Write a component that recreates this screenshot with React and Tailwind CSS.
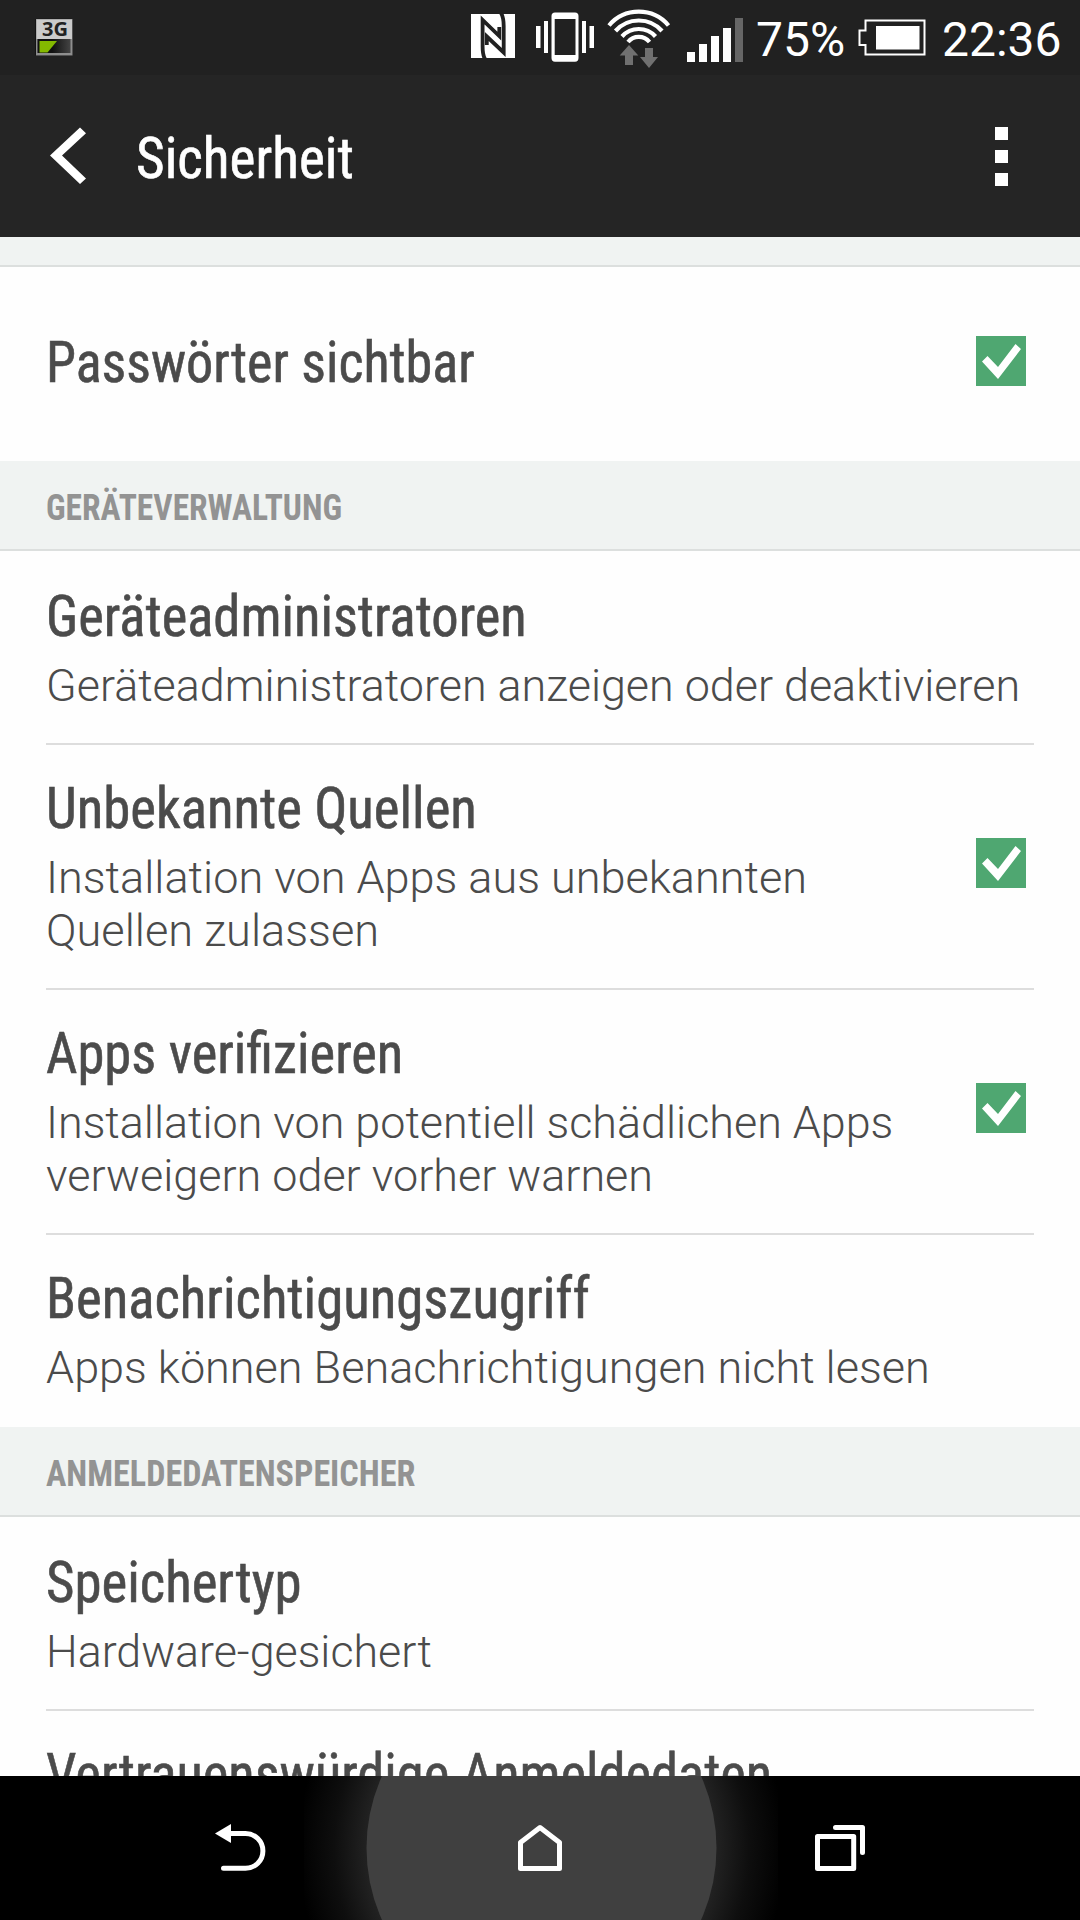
import { useLayoutEffect, useRef, useState } from 'react';

// Single line of text, squeezed horizontally to a given width.
function FitText({ width, className, children }) {
  const ref = useRef(null);
  const [scale, setScale] = useState(1);
  useLayoutEffect(() => {
    setScale(width / ref.current.offsetWidth);
  }, [width]);
  return (
    <div className="flex">
      <span
        ref={ref}
        className={`block origin-left whitespace-nowrap ${className}`}
        style={{ transform: `scaleX(${scale})` }}
      >
        {children}
      </span>
    </div>
  );
}

function NetworkIcon() {
  return (
    <svg className="h-[38px] w-[38px] overflow-visible" viewBox="0 0 38 38">
      <defs>
        <linearGradient id="net" x1="0" y1="0" x2="1" y2="0">
          <stop offset="0.45" stopColor="#111" />
          <stop offset="1" stopColor="#444" />
        </linearGradient>
      </defs>
      <rect x="0.3" y="0.8" width="37.2" height="37" rx="1" fill="#111" />
      <rect x="1" y="1" width="36.5" height="36.5" fill="#8e8e8e" />
      <rect x="1.5" y="1.5" width="35.5" height="19.5" fill="#cbcbcb" />
      <rect x="2.5" y="21" width="33" height="14" fill="url(#net)" />
      <path d="M4.500 23H22L12.500 34.500H4.500Z" fill="#84b900" />
      <text x="7" y="18" fontSize="19" fontWeight="700" fontFamily="Noto Sans, sans-serif" textLength="26" lengthAdjust="spacingAndGlyphs" fill="#222">3G</text>
    </svg>
  );
}

function NfcIcon() {
  return (
    <svg className="h-11 w-11" viewBox="0 0 44 44">
      <rect width="44" height="44" fill="#fff" />
      <g fill="none" stroke="#212121" strokeWidth="3.800">
        <path d="M14 45C11.500 41 11.600 37 11.600 32V6L28.300 22V13" />
        <path d="M30 -1C32.500 3 32.700 7 32.700 12V38.500L15.800 22.500V31" />
      </g>
    </svg>
  );
}

function VibrateIcon() {
  return (
    <svg className="h-[50px] w-[58px]" viewBox="0 0 58 50">
      <g fill="#fff">
        <rect x="0" y="14" width="4.500" height="22" />
        <rect x="8" y="9" width="4" height="32" />
        <rect x="46" y="9" width="4" height="32" />
        <rect x="53.500" y="14" width="4.500" height="22" />
        <path fillRule="evenodd" d="M19 0.500H39Q42.500 0.500 42.500 4V46Q42.500 49.700 39 49.700H19Q15.500 49.700 15.500 46V4Q15.500 0.500 19 0.500ZM18.700 7V43H39.500V7Z" />
      </g>
    </svg>
  );
}

function WifiIcon() {
  return (
    <svg className="h-[61px] w-16" viewBox="0 0 64 61">
      <g fill="none" stroke="#fff" strokeWidth="4.200">
        <path d="M2 17.500A39 39 0 0 1 61.500 17.500" />
        <path d="M8.500 23A31 31 0 0 1 55 23" />
        <path d="M15 28.500A22.500 22.500 0 0 1 48.500 28.500" />
        <path d="M21 34A14 14 0 0 1 42.500 34" />
      </g>
      <path d="M22 37L31.300 47.500H26V57H18V47.500H12.700Z" fill="#707070" />
      <path d="M42 60L51 49H46V40H38V49H33Z" fill="#707070" />
    </svg>
  );
}

function SignalIcon() {
  return (
    <svg className="h-11 w-14" viewBox="0 0 56 44">
      <g fill="#fff">
        <rect x="0" y="34" width="8" height="10" />
        <rect x="12" y="26" width="8" height="18" />
        <rect x="24" y="18" width="8" height="26" />
        <rect x="36" y="10" width="8" height="34" />
      </g>
      <rect x="48" y="0" width="8" height="44" fill="#666" />
    </svg>
  );
}

function BatteryIcon() {
  return (
    <svg className="h-[37px] w-[68px]" viewBox="0 0 68 37">
      <path d="M7.500 1.500H66.500V35.500H7.500V26H1.500V11.500H7.500Z" fill="none" stroke="#fff" strokeWidth="2" />
      <rect x="18" y="7" width="43.500" height="23.500" fill="#fff" />
    </svg>
  );
}

function StatusBar() {
  return (
    <div className="flex h-[75px] items-start bg-[#212121] pl-[35px] pr-[18px] text-[48px] leading-[56px] text-white">
      <div className="mt-[18px]"><NetworkIcon /></div>
      <div className="ml-auto mt-3.5"><NfcIcon /></div>
      <div className="ml-[21px] mt-3"><VibrateIcon /></div>
      <div className="ml-[13px] mt-2"><WifiIcon /></div>
      <div className="ml-4 mt-[18px]"><SignalIcon /></div>
      <span className="ml-[13px] mt-3 w-[90px]">75%</span>
      <div className="ml-3 mt-[19px]"><BatteryIcon /></div>
      <span className="ml-4 mt-3 w-[120px]">22:36</span>
    </div>
  );
}

function AppBar() {
  return (
    <div className="flex h-[162px] items-center bg-[#252525] pl-[50px] pr-[72px] text-white">
      <svg className="-mt-px h-[57px] w-9" viewBox="0 0 36 57">
        <path d="M0 28.500L30 0.500L36 6.200L12 28.500L36 51.500L30 57Z" fill="#fff" />
      </svg>
      <div className="ml-[50px] mt-[5px]">
        <FitText width={218} className="text-[57px] leading-[67px] [-webkit-text-stroke:0.6px] [font-stretch:75%]">Sicherheit</FitText>
      </div>
      <div className="ml-auto mt-px flex flex-col gap-2.5">
        <i className="size-[13px] bg-white" />
        <i className="size-[13px] bg-white" />
        <i className="size-[13px] bg-white" />
      </div>
    </div>
  );
}

function Checkbox({ tall }) {
  return (
    <svg className={`mr-2 size-[50px] shrink-0 ${tall ? 'mb-[5px]' : 'mb-[7px]'}`} viewBox="0 0 50 50">
      <rect width="50" height="50" fill="#4fa771" />
      <path d="M6 25.500L11.500 20L22 31L39.500 8L45 13L22 43Z" fill="#fff" />
    </svg>
  );
}

function SectionHeader({ width, children }) {
  return (
    <div className="h-[90px] border-b-2 border-[#dcdfde] bg-[#f0f3f2] px-[46px] pt-[26px] text-[#939393]">
      <FitText width={width} className="text-[36px] leading-[42px] font-bold [font-stretch:75%]">{children}</FitText>
    </div>
  );
}

function Row({ title, width, lines = [], checked, tall }) {
  return (
    <div className={`flex items-center justify-between border-b-2 border-[#dddddd] last:border-b-0 ${tall ? 'py-[61px]' : 'py-[31px]'}`}>
      <div>
        <div className="pb-0.5">
          <FitText width={width} className="text-[57px] leading-[65px] [-webkit-text-stroke:0.6px] [font-stretch:75%]">{title}</FitText>
        </div>
        {lines.length > 0 && (
          <div className="mt-2">
            {lines.map(([text, w]) => (
              <FitText key={text} width={w} className="text-[45px] leading-[53px] font-light">{text}</FitText>
            ))}
          </div>
        )}
      </div>
      {checked && <Checkbox tall={tall} />}
    </div>
  );
}

function Group({ children }) {
  return <div className="px-[46px] py-0.5">{children}</div>;
}

function NavBar() {
  return (
    <div className="relative flex h-36 items-start overflow-hidden bg-black">
      <svg className="absolute left-[304px] top-0 h-36 w-[474px]" viewBox="304 1776 474 144">
        <defs>
          <radialGradient id="glow" gradientUnits="userSpaceOnUse" cx="541.500" cy="1848" r="244">
            <stop offset="0.7" stopColor="#242424" />
            <stop offset="0.85" stopColor="#0e0e0e" />
            <stop offset="1" stopColor="#000" />
          </radialGradient>
        </defs>
        <rect x="304" y="1776" width="474" height="144" fill="url(#glow)" />
        <circle cx="541.500" cy="1848" r="175" fill="#404040" />
      </svg>
      <svg className="relative ml-[215px] mt-12 h-12 w-[52px]" viewBox="215 1824 52 48">
        <path d="M215 1833.500L231 1824V1843Z" fill="#fff" />
        <path d="M230 1833.500H245.500A17.400 17.400 0 0 1 245.500 1868.300H223.500" fill="none" stroke="#fff" strokeWidth="5" strokeLinecap="round" />
      </svg>
      <svg className="relative ml-[249px] mt-12 h-12 w-12" viewBox="516 1824 48 48">
        <path d="M520.500 1842.500L540 1827.500L559.500 1842.500V1868.500H520.500Z" fill="none" stroke="#fff" strokeWidth="5" strokeLinejoin="round" />
      </svg>
      <svg className="relative ml-[250px] mt-12 h-12 w-[52px]" viewBox="814 1824 52 48">
        <g fill="none" stroke="#fff" strokeWidth="5" strokeLinejoin="round" strokeLinecap="round">
          <rect x="817.500" y="1836.500" width="36.200" height="32" />
          <path d="M835.500 1827.500H862.500V1852.500" />
        </g>
      </svg>
    </div>
  );
}

export default function App() {
  return (
    <div className="flex h-[1920px] w-[1080px] flex-col overflow-hidden bg-white font-[Roboto,sans-serif] text-[#4b4b4b]">
      <StatusBar />
      <AppBar />
      <main className="h-[1539px] overflow-hidden bg-[#fefefe]">
        <div className="h-[30px] border-b-2 border-[#dcdfde] bg-[#f0f3f2]" />
        <Group>
          <Row title="Passwörter sichtbar" width={429} checked tall />
        </Group>
        <div className="h-px" />
        <SectionHeader width={296}>GERÄTEVERWALTUNG</SectionHeader>
        <Group>
          <Row
            title="Geräteadministratoren"
            width={480.5}
            lines={[['Geräteadministratoren anzeigen oder deaktivieren', 974]]}
          />
          <Row
            title="Unbekannte Quellen"
            width={430.5}
            lines={[['Installation von Apps aus unbekannten', 761.5], ['Quellen zulassen', 333]]}
            checked
          />
          <Row
            title="Apps verifizieren"
            width={357}
            lines={[['Installation von potentiell schädlichen Apps', 847.5], ['verweigern oder vorher warnen', 607]]}
            checked
          />
          <Row
            title="Benachrichtigungszugriff"
            width={543.5}
            lines={[['Apps können Benachrichtigungen nicht lesen', 884]]}
          />
        </Group>
        <SectionHeader width={369.5}>ANMELDEDATENSPEICHER</SectionHeader>
        <Group>
          <Row title="Speichertyp" width={256} lines={[['Hardware-gesichert', 386]]} />
          <Row title="Vertrauenswürdige Anmeldedaten" width={726} />
        </Group>
      </main>
      <NavBar />
    </div>
  );
}
